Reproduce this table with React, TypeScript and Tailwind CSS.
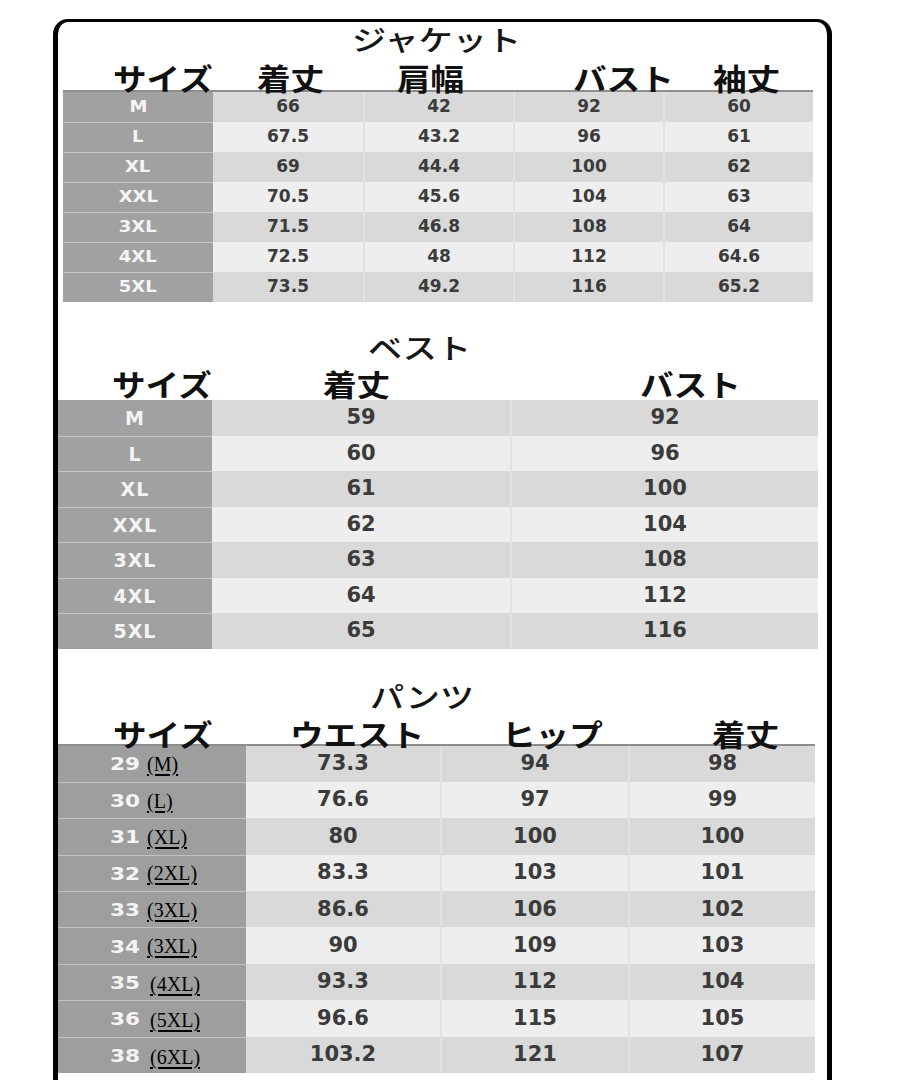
import React from "react";

const jacket = [
  ["M", "66", "42", "92", "60"],
  ["L", "67.5", "43.2", "96", "61"],
  ["XL", "69", "44.4", "100", "62"],
  ["XXL", "70.5", "45.6", "104", "63"],
  ["3XL", "71.5", "46.8", "108", "64"],
  ["4XL", "72.5", "48", "112", "64.6"],
  ["5XL", "73.5", "49.2", "116", "65.2"],
];

const vest = [
  ["M", "59", "92"],
  ["L", "60", "96"],
  ["XL", "61", "100"],
  ["XXL", "62", "104"],
  ["3XL", "63", "108"],
  ["4XL", "64", "112"],
  ["5XL", "65", "116"],
];

const pants = [
  ["29", "(M)", "73.3", "94", "98"],
  ["30", "(L)", "76.6", "97", "99"],
  ["31", "(XL)", "80", "100", "100"],
  ["32", "(2XL)", "83.3", "103", "101"],
  ["33", "(3XL)", "86.6", "106", "102"],
  ["34", "(3XL)", "90", "109", "103"],
  ["35", "(4XL)", "93.3", "112", "104"],
  ["36", "(5XL)", "96.6", "115", "105"],
  ["38", "(6XL)", "103.2", "121", "107"],
];

function rowBg(i: number) {
  return i % 2 === 0 ? "bg-[#d9d9d9]" : "bg-[#eeeeee]";
}

function JacketTable() {
  return (
    <div className="ml-[5px] w-[750px] border-t-2 border-[#8e8e8e]">
      {jacket.map((r, i) => (
        <div key={r[0]} className={`flex h-[30px] items-center ${rowBg(i)}`}>
          <div
            className={`flex h-full w-[150px] items-center justify-center bg-[#a1a1a1] ${
              i > 0 ? "border-t border-[#c6c6c6]" : ""
            }`}
          >
            <span className="inline-block scale-x-[1.2] text-[15px] font-bold text-[#f4f4f4]">{r[0]}</span>
          </div>
          {r.slice(1).map((v, j) => (
            <div
              key={j}
              className={`flex h-full w-[150px] items-center justify-center text-[17px] font-bold text-[#3b3b3b] ${
                j > 0 ? "border-l-2 border-[#e2e2e2]" : ""
              }`}
            >
              {v}
            </div>
          ))}
        </div>
      ))}
    </div>
  );
}

function VestTable() {
  return (
    <div className="w-[760px]">
      {vest.map((r, i) => (
        <div key={r[0]} className={`grid h-[35.5px] grid-cols-[154px_298px_308px] ${rowBg(i)}`}>
          <div
            className={`flex items-center justify-center bg-[#a1a1a1] ${
              i > 0 ? "border-t border-[#c6c6c6]" : ""
            }`}
          >
            <span className="text-[19px] font-bold tracking-[1px] text-[#f4f4f4]">{r[0]}</span>
          </div>
          <div className="flex items-center justify-center text-[21px] font-bold text-[#3b3b3b]">{r[1]}</div>
          <div className="flex items-center justify-center border-l-2 border-[#e2e2e2] text-[21px] font-bold text-[#3b3b3b]">
            {r[2]}
          </div>
        </div>
      ))}
    </div>
  );
}

function PantsTable() {
  return (
    <div className="w-[757px] border-t-2 border-[#8e8e8e]">
      {pants.map((r, i) => (
        <div key={r[0]} className={`grid h-[36.4px] grid-cols-[188px_194px_188px_187px] ${rowBg(i)}`}>
          <div
            className={`flex items-center pl-[52px] bg-[#9e9e9e] ${
              i > 0 ? "border-t border-[#c2c2c2]" : ""
            }`}
          >
            <span className="inline-block origin-left scale-x-[1.2] text-[18px] font-bold text-[#f4f4f4]">{r[0]}</span>
            <span
              className={`font-['Liberation_Serif',serif] text-[20px] leading-none text-black underline underline-offset-[3px] ${
                i >= 6 ? "ml-[15px] mt-[3px]" : "ml-[12px]"
              }`}
            >
              {r[1]}
            </span>
          </div>
          {r.slice(2).map((v, j) => (
            <div
              key={j}
              className={`flex items-center justify-center text-[21px] font-bold text-[#3b3b3b] ${
                j > 0 ? "border-l-2 border-[#e2e2e2]" : ""
              }`}
            >
              {v}
            </div>
          ))}
        </div>
      ))}
    </div>
  );
}

function Title({ text, left }: { text: string; left: string }) {
  return (
    <div className={`h-[28px] font-['Noto_Sans_CJK_JP',sans-serif] text-[28px] leading-[28px] font-medium text-[#161616] ${left}`}>
      <span className="inline-block origin-left scale-x-[1.22]">{text}</span>
    </div>
  );
}

function Head({ text, w }: { text: string; w: string }) {
  return (
    <div className={`shrink-0 ${w}`}>
      <span className="inline-block origin-left scale-x-[1.12] whitespace-nowrap">{text}</span>
    </div>
  );
}

export default function App() {
  return (
    <div className="min-h-[1080px] bg-white pl-[53px] pt-[19px] font-['DejaVu_Sans',sans-serif]">
      <div className="h-[1061px] w-[779px] overflow-hidden rounded-t-[15px] border-x-[5px] border-t-[3px] border-black">
        {/* ジャケット */}
        <div className="mt-[3px]">
          <Title text="ジャケット" left="pl-[294px]" />
        </div>
        <div className="mt-[9px] flex h-[28px] pl-[55px] font-['Noto_Sans_CJK_JP',sans-serif] text-[30px] leading-[30px] font-bold text-[#111]">
          <Head text="サイズ" w="w-[144px]" />
          <Head text="着丈" w="w-[140px]" />
          <Head text="肩幅" w="w-[176px]" />
          <Head text="バスト" w="w-[140px]" />
          <Head text="袖丈" w="w-[80px]" />
        </div>
        <JacketTable />

        {/* ベスト */}
        <div className="mt-[31px]">
          <Title text="ベスト" left="pl-[310px]" />
        </div>
        <div className="mt-[7px] flex h-[32px] pl-[54px] font-['Noto_Sans_CJK_JP',sans-serif] text-[30px] leading-[30px] font-bold text-[#111]">
          <Head text="サイズ" w="w-[211px]" />
          <Head text="着丈" w="w-[317px]" />
          <Head text="バスト" w="w-[120px]" />
        </div>
        <VestTable />

        {/* パンツ */}
        <div className="mt-[33px]">
          <Title text="パンツ" left="pl-[312px]" />
        </div>
        <div className="mt-[8px] flex h-[26px] pl-[55px] font-['Noto_Sans_CJK_JP',sans-serif] text-[30px] leading-[30px] font-bold text-[#111]">
          <Head text="サイズ" w="w-[177px]" />
          <Head text="ウエスト" w="w-[212px]" />
          <Head text="ヒップ" w="w-[210px]" />
          <Head text="着丈" w="w-[80px]" />
        </div>
        <PantsTable />
      </div>
    </div>
  );
}
